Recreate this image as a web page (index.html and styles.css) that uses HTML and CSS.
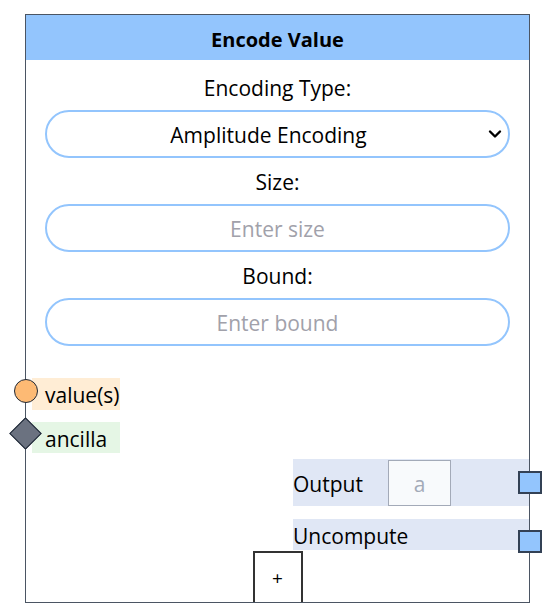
FILE: index.html
```html
<!DOCTYPE html>
<html>
<head>
<meta charset="utf-8">
<link rel="stylesheet" href="styles.css">
</head>
<body>
<div class="node">
  <div class="header">Encode Value</div>
  <div class="form">
    <div class="label first">Encoding Type:</div>
    <div class="select">
      <span>Amplitude Encoding</span>
      <svg class="chev" width="14" height="10" viewBox="0 0 14 10"><path d="M2 2.5 L7 7.5 L12 2.5" fill="none" stroke="#000" stroke-width="2.4" stroke-linecap="round" stroke-linejoin="round"/></svg>
    </div>
    <div class="label">Size:</div>
    <div class="input">Enter size</div>
    <div class="label">Bound:</div>
    <div class="input">Enter bound</div>
  </div>
  <div class="inputs">
    <div class="port value"><span class="h-circle"></span>value(s)</div>
    <div class="port ancilla"><span class="h-diamond"></span>ancilla</div>
  </div>
  <div class="outputs">
    <div class="out out-main">
      <span class="out-label">Output</span>
      <div class="out-box">a</div>
      <span class="h-square"></span>
    </div>
    <div class="out out-unc">
      <span class="out-label">Uncompute</span>
      <span class="h-square"></span>
    </div>
  </div>
  <div class="add">+</div>
</div>
</body>
</html>
```
FILE: styles.css
```css
html, body {
  margin: 0;
  padding: 0;
  background: #fff;
}
body {
  font-family: "Open Sans", "Noto Sans", sans-serif;
  color: #000;
}
.node {
  position: relative;
  box-sizing: border-box;
  width: 505px;
  height: 589px;
  margin: 14px 0 0 25px;
  border: 1px solid #4b5563;
  display: flex;
  flex-direction: column;
}
.header {
  height: 45px;
  background: #93c5fd;
  font-weight: 700;
  font-size: 20px;
  line-height: 49px;
  text-align: center;
}
.form {
  padding: 0 19px;
  display: flex;
  flex-direction: column;
}
.label {
  font-size: 21px;
  line-height: 28px;
  text-align: center;
  margin: 10px 0 8px;
}
.label.first {
  margin-top: 14px;
}
.select, .input {
  box-sizing: border-box;
  height: 48px;
  border: 2px solid #93c5fd;
  border-radius: 24px;
  font-size: 21px;
  display: flex;
  align-items: center;
  justify-content: center;
  position: relative;
}
.select span {
  margin-left: -18px;
  padding-top: 2px;
}
.chev {
  position: absolute;
  right: 6px;
  top: 17px;
}
.input {
  color: #a1a1aa;
  padding-top: 2px;
}
.inputs {
  margin-top: 32px;
  display: flex;
  flex-direction: column;
  gap: 12px;
}
.port {
  position: relative;
  width: 75px;
  margin-left: 6px;
  padding-left: 13px;
  font-size: 21px;
  height: 32px;
  line-height: 35px;
}
.port.value { background: #ffedd5; }
.port.ancilla { background: #e5f6e5; height: 31px; line-height: 34px; }
.h-circle {
  position: absolute;
  left: -18px;
  top: 1px;
  box-sizing: border-box;
  width: 24px;
  height: 24px;
  border-radius: 50%;
  background: #fdba74;
  border: 1.5px solid #1f2937;
}
.h-diamond {
  position: absolute;
  left: -18px;
  top: 0px;
  box-sizing: border-box;
  width: 23px;
  height: 23px;
  background: #6b7280;
  border: 1.5px solid #1f2937;
  transform: rotate(45deg);
}
.outputs {
  margin-top: 6px;
  display: flex;
  flex-direction: column;
  align-items: flex-end;
  gap: 13px;
}
.out {
  position: relative;
  width: 236px;
  background: #e0e7f5;
  font-size: 21px;
  display: flex;
  align-items: center;
}
.out-label {
  padding-top: 3px;
}
.out-main { height: 47px; }
.out-unc { height: 31px; }
.out-main .out-label { width: 95px; }
.out-box {
  box-sizing: border-box;
  width: 63px;
  height: 46px;
  margin-top: 1px;
  padding-top: 2px;
  background: #f8fafc;
  border: 1.5px solid #a3aab8;
  color: #a3aab8;
  display: flex;
  align-items: center;
  justify-content: center;
}
.h-square {
  position: absolute;
  right: -13px;
  box-sizing: border-box;
  width: 24px;
  height: 23px;
  background: #93c5fd;
  border: 2px solid #334155;
}
.out-main .h-square { top: 12px; }
.out-unc .h-square { top: 11px; }
.add {
  margin: auto auto 0;
  box-sizing: border-box;
  width: 50px;
  height: 51px;
  border: 2px solid #333;
  border-bottom: 0;
  background: #fff;
  font-size: 19px;
  display: flex;
  align-items: center;
  justify-content: center;
}
```
